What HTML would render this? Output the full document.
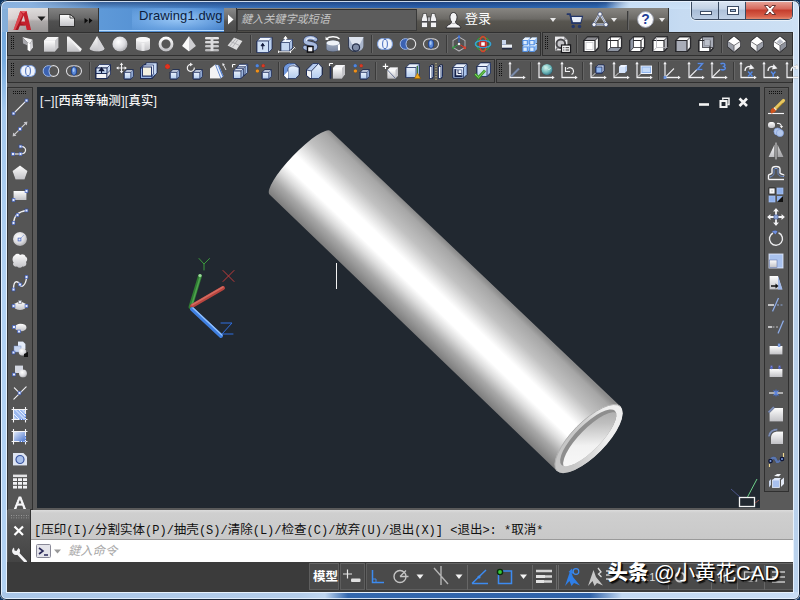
<!DOCTYPE html>
<html lang="zh-CN"><head><meta charset="utf-8"><title>Drawing1.dwg</title>
<style>
*{margin:0;padding:0;box-sizing:border-box}
html,body{width:800px;height:600px;overflow:hidden;background:#0f3560;font-family:"Liberation Sans","Noto Sans CJK SC",sans-serif}
#win{position:absolute;left:0;top:0;width:800px;height:600px;border-radius:7px 7px 6px 6px;overflow:hidden;
 background:linear-gradient(to bottom,#6fa6dc 0,#78acdf 60px,#a6caee 110px,#b2d2f3 300px,#b2d2f3 100%);}
#win>*{position:absolute}
.abs{position:absolute}
#edge{left:0;top:0;width:800px;height:600px;border:1px solid #1b2738;border-radius:7px 7px 6px 6px;box-shadow:inset 0 0 0 1px rgba(235,245,255,.85);z-index:50;pointer-events:none}
#tstrip{left:1px;top:1px;width:798px;height:31px;
 background:linear-gradient(to right,#86afd9 0,#7aa6d5 50px,#5e99d8 100px,#5692d4 140px,#3f7ac4 230px,#2f68b6 420px,#3270bc 596px,#5a90d0 612px,#b8d3ef 630px,#c6dbf2 680px,#cde0f4 800px)}
#tshade{left:1px;top:1px;width:798px;height:8px;background:linear-gradient(to bottom,rgba(10,30,80,.55),rgba(10,30,80,.0))}
#tshadeR{left:606px;top:1px;width:193px;height:8px;background:linear-gradient(to right,rgba(200,224,248,0),rgba(204,226,248,.95) 24px)}
#tshadeL{left:1px;top:1px;width:100px;height:8px;background:linear-gradient(to right,rgba(140,180,225,.95) 30%,rgba(140,180,225,0))}
#tglow{left:132px;top:8px;width:92px;height:23px;background:radial-gradient(ellipse at 50% 50%,rgba(160,205,250,.9),rgba(120,175,235,.6) 60%,rgba(100,160,225,.0) 100%)}
#tline{left:99px;top:30px;width:125px;height:1px;background:#b8dcff}
#title{left:139px;top:8px;font-size:13px;line-height:16px;color:#0c1c3c;letter-spacing:.1px;white-space:nowrap}
#appbtn{left:8px;top:8px;width:40px;height:24px;background:linear-gradient(to right,rgba(255,240,240,.35),rgba(255,255,255,0) 60%),linear-gradient(to bottom,#dedcdc,#cbc6c6 45%,#aeaaaa 55%,#969494)}
#qat{left:48px;top:8px;width:51px;height:24px;background:linear-gradient(to bottom,#828282,#666 45%,#505050 55%,#474747);border-left:1px solid #555;border-right:1px solid #333}
#ic1{left:224px;top:8px;width:445px;height:24px;background:linear-gradient(to bottom,#888682,#6c6a66 45%,#585650 55%,#4e4c48);border-right:1px solid #333}
#arrowbtn{left:224px;top:8px;width:13px;height:24px;background:linear-gradient(to bottom,#8a8a8a,#6a6a6a 45%,#555 55%,#4a4a4a);border-right:1px solid #333}
#search{left:237px;top:9px;width:180px;height:22px;background:#5c5c5c;border:1px solid #3a3a3a;border-top-color:#2e2e2e;color:#c4c4c4;font-size:11.1px;line-height:19px;padding-left:3px;font-style:italic;white-space:nowrap;overflow:hidden}
.wt{color:#fff;font-size:12px;line-height:14px;white-space:nowrap}
.dd{width:0;height:0;border-left:3.5px solid transparent;border-right:3.5px solid transparent;border-top:4px solid #e8e8e8}
#wbtns{left:691px;top:1px;width:102px;height:19px;border:1px solid #3a4a60;border-top:none;border-radius:0 0 5px 5px;overflow:hidden;box-shadow:0 0 0 1px rgba(255,255,255,.55)}
#wbtns>*{position:absolute;top:0;height:18px}
#wmin{left:0;width:27px;background:linear-gradient(to bottom,#d9e4f1,#c2d1e4 45%,#a8bcd6 50%,#bccde3);border-right:1px solid #3a4a60}
#wmax{left:27px;width:27px;background:linear-gradient(to bottom,#dde7f3,#c8d6e8 45%,#afc2da 50%,#c2d2e6);border-right:1px solid #3a4a60}
#wcls{left:54px;width:47px;background:linear-gradient(to bottom,#e8a89c,#d6675a 45%,#c43c2c 50%,#d8604a 85%,#e38a70)}
#tbarea{left:7px;top:32px;width:786px;height:560px;background:#5a5a5a}
.tb{background:#555555;border:1px solid #303030;box-shadow:inset 0 1px 0 #5c5c5c}
.ic{position:absolute;overflow:visible;filter:drop-shadow(0 0 .7px rgba(0,0,0,.55))}
.sv{position:absolute;width:2px;background:linear-gradient(to right,#3a3a3a 50%,#666 50%)}
.gv{position:absolute;width:4px;height:14px;background:conic-gradient(from 0deg at 1px 1px,transparent 0 75%,#101010 75% 100%) 0 0/2px 2px}
.gh{position:absolute;height:4px;width:14px;background:conic-gradient(from 0deg at 1px 1px,transparent 0 75%,#101010 75% 100%) 0 0/2px 2px}
#canvas{left:37px;top:87px;width:723px;height:421px;background:#212830;overflow:hidden}
#vplabel{left:3px;top:7px;color:#f4f4f4;font-size:12.3px;line-height:14px;font-weight:500;white-space:nowrap;letter-spacing:.25px}
#cmdleft{left:8px;top:509px;width:23px;height:53px;background:linear-gradient(to bottom,#6a6a6a,#555 30%,#444 100%);border-right:1px solid #333}
#hist{left:31px;top:510px;width:762px;height:29px;background:linear-gradient(to bottom,#dcdcdc 0,#cfcfcf 3px,#c9c9c9 100%);font-family:"Liberation Mono","Noto Sans CJK SC",monospace;font-size:12px;line-height:16px;color:#111;white-space:nowrap;padding:13px 0 0 3px;overflow:hidden}
#cmdin{left:31px;top:539px;width:762px;height:23px;background:#fff;border-top:1px solid #9a9a9a}
#cmdph{left:68px;top:543.5px;font-size:12.3px;color:#a8a8a8;font-style:italic;line-height:14px;white-space:nowrap}
#status{left:7px;top:562px;width:786px;height:30px;background:#3b3b3b}
.sbb{position:absolute;top:563px;height:27px;background:#4a4a4a;border:1px solid #5e5e5e;border-top-color:#666}
.cj{font-size:12.5px}
#wm{left:607.5px;top:559.5px;font-size:20.45px;line-height:26px;color:#fff;white-space:nowrap;text-shadow:1px 1px 1px #000,2px 2px 1px rgba(0,0,0,.7);font-family:"Liberation Sans","Noto Sans CJK SC",sans-serif;z-index:40}
#wm b{font-weight:900}
</style></head><body>
<svg width="0" height="0" style="position:absolute"><defs>
<linearGradient id="gW" x1="0" y1="0" x2="0" y2="1"><stop offset="0" stop-color="#fdfdfd"/><stop offset="1" stop-color="#c2c2c6"/></linearGradient>
<linearGradient id="gS" x1="0" y1="0" x2="0" y2="1"><stop offset="0" stop-color="#d6d6d8"/><stop offset="1" stop-color="#a4a4a8"/></linearGradient>
<linearGradient id="gB" x1="0" y1="0" x2="0" y2="1"><stop offset="0" stop-color="#ebf2fd"/><stop offset="1" stop-color="#b2cbee"/></linearGradient>
<linearGradient id="gBd" x1="0" y1="0" x2="0" y2="1"><stop offset="0" stop-color="#86a9e0"/><stop offset="1" stop-color="#3f69b6"/></linearGradient>
<radialGradient id="gSp" cx=".4" cy=".35" r=".7"><stop offset="0" stop-color="#ffffff"/><stop offset=".6" stop-color="#dcdce0"/><stop offset="1" stop-color="#a8a8ac"/></radialGradient>
<radialGradient id="gGl" cx=".4" cy=".35" r=".7"><stop offset="0" stop-color="#d8f4f0"/><stop offset=".6" stop-color="#6fb8b8"/><stop offset="1" stop-color="#2f6f86"/></radialGradient>
</defs></svg>
<div id="win">
<div id="tstrip"></div><div id="tshade"></div><div id="tshadeR"></div><div id="tshadeL"></div><div id="tglow"></div><div id="tline"></div>
<div id="title">Drawing1.dwg</div>
<div id="appbtn"><svg class="abs" style="left:2.500px;top:1px" width="36" height="22" viewBox="0 0 36 22"><g transform="translate(1.200 0) scale(.9 1)"><path d="M1.500 21L9 2H16L21 21H16.200L15 16.500H8.500L6.500 21Z" fill="#c4202c"/><path d="M9 2H16L12.500 4.500Z" fill="#e46068"/><path d="M10 12.500L12.800 6.500L14.300 12.500Z" fill="#d8cccc"/><path d="M3.500 21L11.500 6L9.500 14.500L15 16.500H8.500L6.500 21Z" fill="#98101a" opacity=".65"/><path d="M9 2L1.500 21H3.500L11.500 6Z" fill="#e05058" opacity=".8"/></g><path d="M26.500 7.500H34.500L30.500 12Z" fill="#1c1c1c"/></svg></div>
<div id="qat"><svg class="abs" style="left:0;top:0" width="50" height="24" viewBox="0 0 50 24"><path d="M10.500 6.500H21L25.500 10V18.500H10.500Z" fill="url(#gW)" stroke="#1c1c1c" stroke-width=".8"/><path d="M21 6.500V10H25.500Z" fill="#fff" stroke="#1c1c1c" stroke-width=".8"/><path d="M35.500 10L39 12.500L35.500 15.500ZM40 10L43.500 12.500L40 15.500Z" fill="#0a0a0a"/></svg></div>
<div id="ic1"></div><div id="arrowbtn"><svg class="abs" style="left:3px;top:6px" width="7" height="11" viewBox="0 0 7 11"><path d="M1 0.5 L6.5 5.5 L1 10.5Z" fill="#fff"/></svg></div>
<div id="search">鍵入关鍵字或短语</div>
<svg class="abs" style="left:419px;top:9px" width="22" height="22" viewBox="0 0 22 22"><path d="M2.500 10L4 6V4.500H7.500V6L8.500 10V18.500H2.500Z" fill="#f2f2f4" stroke="#2a2a2a" stroke-width=".6"/><path d="M11.500 10L12.500 6V4.500H16V6L17.500 10V18.500H11.500Z" fill="#f2f2f4" stroke="#2a2a2a" stroke-width=".6"/><rect x="8.500" y="8" width="3" height="4.500" fill="#b8b8bc" stroke="#2a2a2a" stroke-width=".5"/><rect x="2.500" y="12" width="6" height="1.600" fill="#4a4a4e"/><rect x="11.500" y="12" width="6" height="1.600" fill="#4a4a4e"/></svg>
<svg class="abs" style="left:443px;top:9px" width="22" height="22" viewBox="0 0 22 22"><path d="M3 19C3.500 16 7 15.500 8.500 14V12.500C6.200 10.500 6.200 3.500 10.500 3.500C14.800 3.500 14.800 10.500 12.500 12.500V14C14 15.500 17.500 16 18 19Z" fill="#f4f4f6" stroke="#26262a" stroke-width=".9"/><path d="M8.500 13.500C9.500 15 11.500 15 12.500 13.500" fill="none" stroke="#9a9aa0" stroke-width=".8"/></svg>
<div class="wt" style="left:465px;top:12px;font-size:13px">登录</div>
<i class="dd abs" style="left:550px;top:18px"></i>
<svg class="abs" style="left:565px;top:10.500px" width="20" height="20" viewBox="0 0 22 22"><path d="M2 3.500H5.500L8 13.500H17L19 6H6.500" fill="none" stroke="#23366a" stroke-width="1.600"/><path d="M7 6.500H18.500L17 12.500H8.500Z" fill="#e8eef8"/><circle cx="9" cy="17" r="1.900" fill="#23366a"/><circle cx="16" cy="17" r="1.900" fill="#23366a"/><path d="M2 3.500H5.500L8 13.500H17" fill="none" stroke="#23366a" stroke-width="1.600"/></svg>
<svg class="abs" style="left:590px;top:9.500px" width="20" height="20" viewBox="0 0 22 22"><path d="M11 4L18 16H4Z" fill="none" stroke="#e8eef8" stroke-width="2.200" stroke-linejoin="round"/><path d="M11 4L18 16H4Z" fill="none" stroke="#4a5a8a" stroke-width=".7" stroke-linejoin="round"/><circle cx="11" cy="4.500" r="2.300" fill="#f4f6fa" stroke="#34446e" stroke-width=".8"/><circle cx="4.500" cy="16" r="2.300" fill="#f4f6fa" stroke="#34446e" stroke-width=".8"/><circle cx="17.500" cy="16" r="2.300" fill="#f4f6fa" stroke="#34446e" stroke-width=".8"/></svg>
<i class="dd abs" style="left:611px;top:18px"></i>
<i class="sv" style="left:627px;top:11px;height:19px"></i>
<svg class="abs" style="left:635px;top:9px" width="21" height="21" viewBox="0 0 22 22"><circle cx="11" cy="11" r="8.300" fill="#fbfbfd" stroke="#9aa0b0" stroke-width="1"/><text x="11" y="16.200" font-family="Liberation Sans,sans-serif" font-weight="bold" font-size="14.500" fill="#1f3f9a" text-anchor="middle">?</text></svg>
<i class="dd abs" style="left:659px;top:18px"></i>
<div id="wbtns"><div id="wmin"><svg width="27" height="18" viewBox="0 0 27 18"><rect x="8.5" y="10.5" width="11" height="3" fill="#fff" stroke="#3c4c64"/></svg></div>
<div id="wmax"><svg width="27" height="18" viewBox="0 0 27 18"><rect x="8.500" y="5.500" width="11" height="8" fill="#fff" stroke="#3c4c64"/><rect x="11.500" y="8.500" width="5" height="2" fill="#a8c0dd" stroke="#3c4c64"/></svg></div>
<div id="wcls"><svg width="47" height="18" viewBox="0 0 47 18"><path d="M18.500 4.500h3.500l2 2.500l2-2.500h3.500l-3.700 4.500l3.700 4.500h-3.500l-2-2.500l-2 2.500h-3.500l3.700-4.500z" fill="#fff" stroke="#5a2a28" stroke-width=".9"/></svg></div></div>

<div class="abs" style="left:792px;top:20px;width:8px;height:580px;background:linear-gradient(to bottom,#cfe1f5 0,#c6daf1 100px,#b6cee9 300px,#bbd3ee 100%)"></div>
<div class="abs" style="left:0;top:592px;width:800px;height:8px;background:linear-gradient(to right,#a9c6e8 0,#b4cdea 300px,#bfd6f0 325px,#3468ae 348px,#2f62a8 590px,#c2d8f1 622px,#c8dcf4 100%)"></div>
<div id="tbarea"></div><div class="abs" style="left:6px;top:32px;width:788px;height:561px;border:1px solid #e6f1fd;border-top:none"></div>
<div class="tb" style="left:7px;top:32px;width:534px;height:24px"></div>
<div class="tb" style="left:542px;top:32px;width:251px;height:24px"></div>
<div class="tb" style="left:7px;top:59px;width:488px;height:24px"></div>
<div class="tb" style="left:496px;top:59px;width:297px;height:24px"></div>
<i class="gv" style="left:11px;top:36px"></i><i class="gv" style="left:545px;top:36px"></i>
<i class="gv" style="left:11px;top:63px"></i><i class="gv" style="left:499px;top:63px"></i>
<svg class="ic" style="left:18px;top:34px" width="20" height="20" viewBox="0 0 20 20"><path d="M4.500 3L14.500 5.500L12 9.500L9.500 8.500L6 5Z" fill="#f4f4f5"/><path d="M4.500 3L6 5L9.500 8.500V11.500L5 9.500Z" fill="#a9a9ae"/><path d="M9.500 8.500L12 9.500V17.500L9.500 16Z" fill="#ffffff"/><path d="M12 9.500L14.500 5.500L15 13.500L12 17.500Z" fill="#d6d6da"/></svg><svg class="ic" style="left:41px;top:34px" width="20" height="20" viewBox="0 0 20 20"><path d="M3 6.500L6.500 3H17.500V13.500L14 17.500H3Z" fill="#c9c9cc"/><path d="M3 6.500L6.500 3H17.500L14 6.500Z" fill="#f6f6f7"/><rect x="3" y="6.500" width="11" height="11" fill="url(#gW)"/></svg><svg class="ic" style="left:64px;top:34px" width="20" height="20" viewBox="0 0 20 20"><path d="M3 2.500H5L18 15L16.500 17.500H3Z" fill="#f2f2f3"/><path d="M3 2.500L16.500 17.500H3Z" fill="url(#gW)"/></svg><svg class="ic" style="left:87px;top:34px" width="20" height="20" viewBox="0 0 20 20"><path d="M10 2L17.500 14.500A7.500 3 0 0 1 2.500 14.500Z" fill="url(#gW)"/><path d="M10 2L11.500 17.400A7.500 3 0 0 0 17.500 14.500Z" fill="#d2d2d5" opacity=".7"/></svg><svg class="ic" style="left:110px;top:34px" width="20" height="20" viewBox="0 0 20 20"><circle cx="10" cy="10" r="7.600" fill="url(#gSp)"/></svg><svg class="ic" style="left:133px;top:34px" width="20" height="20" viewBox="0 0 20 20"><path d="M3 5.500A7 2.500 0 0 1 17 5.500V14.500A7 2.500 0 0 1 3 14.500Z" fill="url(#gW)"/><ellipse cx="10" cy="5.500" rx="7" ry="2.500" fill="#f8f8f9"/><path d="M8.500 9V17H11.500V9Z" fill="#fff" opacity=".5"/></svg><svg class="ic" style="left:156px;top:34px" width="20" height="20" viewBox="0 0 20 20"><circle cx="10" cy="10" r="6" fill="none" stroke="url(#gW)" stroke-width="3"/></svg><svg class="ic" style="left:179px;top:34px" width="20" height="20" viewBox="0 0 20 20"><path d="M10 2L3 12L10 17.500Z" fill="#fafafa"/><path d="M10 2L17 12L10 17.500Z" fill="#cfcfd2"/></svg><svg class="ic" style="left:202px;top:34px" width="20" height="20" viewBox="0 0 20 20"><g fill="#e8e8ea"><rect x="3" y="3" width="14" height="2.600" rx="1"/><rect x="3" y="7" width="14" height="2.600" rx="1" fill="#d8d8da"/><rect x="3" y="11" width="14" height="2.600" rx="1" fill="#c8c8ca"/><rect x="3" y="15" width="14" height="2.600" rx="1" fill="#b8b8ba"/><rect x="8.500" y="3" width="3" height="14" fill="#dcdcde"/></g></svg><svg class="ic" style="left:225px;top:34px" width="20" height="20" viewBox="0 0 20 20"><path d="M2.500 11.500L9 3.500L17.500 7L11.500 16Z" fill="#dededf"/><path d="M5.700 7.500L14.500 11.500M7.400 13.300L13.200 5.200M4.500 12.400L11.200 4.400" stroke="#a8a8ac" stroke-width=".8" fill="none"/></svg><i class="sv" style="left:250px;top:35px;height:18px"></i><svg class="ic" style="left:254px;top:34px" width="20" height="20" viewBox="0 0 20 20"><path d="M3 7L6.5 3.5H18.0V15.0L14.5 18.5H3Z" fill="#b9cfee" stroke="#263663" stroke-width="0.8" stroke-linejoin="round"/><path d="M3 7L6.5 3.5H18.0L14.5 7Z" fill="#f0f5fd" stroke="#263663" stroke-width="0.5599999999999999" stroke-linejoin="round"/><rect x="3" y="7" width="11.5" height="11.5" fill="#cfe0f6" stroke="#263663" stroke-width="0.8" stroke-linejoin="round"/><path d="M8.700 15.500V10.500M7 11.800L8.700 9.300L10.400 11.800Z" stroke="#10183a" stroke-width=".9" fill="#10183a"/></svg><svg class="ic" style="left:276px;top:34px" width="20" height="20" viewBox="0 0 20 20"><path d="M5 8.5L8 5.5H16.5V14.0L13.5 17.0H5Z" fill="#a9c0e4" stroke="#263663" stroke-width="0.7" stroke-linejoin="round"/><path d="M5 8.5L8 5.5H16.5L13.5 8.5Z" fill="#e8f0fb" stroke="#263663" stroke-width="0.48999999999999994" stroke-linejoin="round"/><rect x="5" y="8.5" width="8.5" height="8.5" fill="#c4d6f0" stroke="#263663" stroke-width="0.7" stroke-linejoin="round"/><path d="M9.500 7.500V3.500M7.900 4.800L9.500 2.300L11.100 4.800Z" stroke="#fff" stroke-width="1" fill="#fff"/><path d="M2.500 17.800H14.500L18.500 13.500" stroke="#fff" stroke-width="1" fill="none"/><path d="M2.500 16.500V19M14.500 16.500V19M17.600 12.600L19.400 14.400" stroke="#fff" stroke-width=".9"/></svg><svg class="ic" style="left:300px;top:34px" width="20" height="20" viewBox="0 0 20 20"><path d="M15.500 5.500C12 2.500 4.500 3.500 5.500 7.500C6.200 10.500 15.500 8.500 15.500 12.500C15.500 15.500 9 16 5 13.500" fill="none" stroke="#3f4f7c" stroke-width="4.600" stroke-linecap="round"/><path d="M15.500 5.500C12 2.500 4.500 3.500 5.500 7.500C6.200 10.500 15.500 8.500 15.500 12.500C15.500 15.500 9 16 5 13.500" fill="none" stroke="#a9bbdd" stroke-width="3.400" stroke-linecap="round"/><path d="M14.500 4.800C11.500 3 6 3.800 6.500 6.800" fill="none" stroke="#eaf0fb" stroke-width="1.200"/><rect x="7.500" y="12.500" width="5.500" height="5.500" fill="#f4f4f8" stroke="#0c0c10" stroke-width="1.400"/></svg><svg class="ic" style="left:323px;top:34px" width="20" height="20" viewBox="0 0 20 20"><path d="M3.500 9A6.500 2.500 0 0 1 16.500 9V15A6.500 2.500 0 0 1 3.500 15Z" fill="url(#gBd)" opacity=".75"/><path d="M3.500 9A6.500 2.500 0 0 1 16.500 9V15A6.500 2.500 0 0 1 3.500 15Z" fill="url(#gS)" opacity=".6"/><ellipse cx="10" cy="9" rx="6.500" ry="2.500" fill="#eef2f8"/><path d="M15 11V16.500H17V10Z" fill="#fff"/><path d="M3.500 5C6 2 14 2 16.500 5" stroke="#fff" stroke-width="1.300" fill="none"/><path d="M2.500 2.500V6H6Z" fill="#fff"/></svg><svg class="ic" style="left:346px;top:34px" width="20" height="20" viewBox="0 0 20 20"><path d="M2.500 3H17.500V11C17.500 15 15 17.500 10 17.500C5 17.500 2.500 15 2.500 11Z" fill="#aab6cc"/><path d="M2.500 3H17.500L14 10H6Z" fill="#dde3ee"/><circle cx="10" cy="13.500" r="3.600" fill="#7f8ca6" stroke="#26304a" stroke-width="1.200"/><path d="M2.500 3V11C2.500 15 5 17.500 10 17.500" fill="none" stroke="#26304a" stroke-width=".8"/></svg><i class="sv" style="left:371px;top:35px;height:18px"></i><svg class="ic" style="left:375px;top:34px" width="20" height="20" viewBox="0 0 20 20"><path d="M7.500 4.500C9 4.500 10 5 10 5C10 5 11 4.500 12.500 4.500C15.500 4.500 17.500 7 17.500 10C17.500 13 15.500 15.500 12.500 15.500C11 15.500 10 15 10 15C10 15 9 15.500 7.500 15.500C4.500 15.500 2.500 13 2.500 10C2.500 7 4.500 4.500 7.500 4.500Z" fill="#eef3fc" stroke="#7f9fd8" stroke-width="1.200"/><ellipse cx="10" cy="10" rx="2.400" ry="4.600" fill="none" stroke="#4a6fc0" stroke-width="1"/></svg><svg class="ic" style="left:398px;top:34px" width="20" height="20" viewBox="0 0 20 20"><ellipse cx="12.500" cy="10" rx="5.200" ry="5.400" fill="none" stroke="#e4e4e6" stroke-width="1.200"/><path d="M7.500 4.600A5.400 5.400 0 1 0 7.500 15.400A5.400 5.400 0 0 0 10 14.700A6.500 6.500 0 0 1 10 5.300A5.400 5.400 0 0 0 7.500 4.600Z" fill="#3b62b2" stroke="#a9c0ea" stroke-width="1"/></svg><svg class="ic" style="left:421px;top:34px" width="20" height="20" viewBox="0 0 20 20"><rect x="2.500" y="4.800" width="15" height="10.400" rx="5.200" fill="none" stroke="#d8d8dc" stroke-width="1.200"/><ellipse cx="10" cy="10" rx="2.500" ry="4.200" fill="#5d8ad8" stroke="#244a9a" stroke-width="1"/><ellipse cx="9.600" cy="9" rx="1" ry="2" fill="#a8c8f4"/></svg><i class="sv" style="left:446px;top:35px;height:18px"></i><svg class="ic" style="left:449px;top:34px" width="20" height="20" viewBox="0 0 20 20"><path d="M10 3L16 6.500V13.500L10 17L4 13.500V6.500Z" fill="none" stroke="#b8b8bc" stroke-width="1.100"/><path d="M10 10V2.500" stroke="#4a7ad8" stroke-width="1.200"/><circle cx="10" cy="2.500" r="1.200" fill="#4a7ad8"/><path d="M10 10L4.500 13.500" stroke="#3a9a4a" stroke-width="1.200"/><path d="M10 10L15.500 13.500" stroke="#d04030" stroke-width="1.200"/><circle cx="15.800" cy="13.800" r="1.500" fill="#d84030"/><circle cx="4.300" cy="13.700" r="1.200" fill="#3a9a4a"/><circle cx="10" cy="10" r="1.600" fill="#fff" stroke="#555" stroke-width=".7"/></svg><svg class="ic" style="left:473px;top:34px" width="20" height="20" viewBox="0 0 20 20"><circle cx="10" cy="10" r="6.800" fill="none" stroke="#3f9a46" stroke-width="1.500"/><ellipse cx="10" cy="10" rx="3.400" ry="7.600" fill="none" stroke="#d2452f" stroke-width="1.700"/><ellipse cx="10" cy="10" rx="7.800" ry="3.600" fill="none" stroke="#3aa0d0" stroke-width="1.500"/><rect x="7.600" y="7.600" width="4.800" height="4.800" fill="#fff" stroke="#c03030" stroke-width="1.300"/></svg><svg class="ic" style="left:496px;top:34px" width="20" height="20" viewBox="0 0 20 20"><path d="M6 6H10V10.500H16V14.500H6Z" fill="#eef2f8"/><path d="M6 6H10V10.500H6Z" fill="#c9d6ee"/><path d="M6 14.500H16" stroke="#232a44" stroke-width="1.600"/><path d="M6 10.500H10" stroke="#8a9ac0" stroke-width=".8"/></svg><svg class="ic" style="left:520px;top:34px" width="20" height="20" viewBox="0 0 20 20"><path d="M2.5 12.6L5.1 10.0H10.3V15.200000000000001L7.7 17.8H2.5Z" fill="#8db8f0"/><path d="M2.5 12.6L5.1 10.0H10.3L7.7 12.6Z" fill="#eef6ff"/><rect x="2.5" y="12.6" width="5.2" height="5.2" fill="#4a8ae4"/><rect x="3.4" y="13.5" width="3.4000000000000004" height="3.4000000000000004" fill="#dcecfd"/><path d="M9.3 12.6L11.9 10.0H17.1V15.200000000000001L14.5 17.8H9.3Z" fill="#8db8f0"/><path d="M9.3 12.6L11.9 10.0H17.1L14.5 12.6Z" fill="#eef6ff"/><rect x="9.3" y="12.6" width="5.2" height="5.2" fill="#4a8ae4"/><rect x="10.200000000000001" y="13.5" width="3.4000000000000004" height="3.4000000000000004" fill="#dcecfd"/><path d="M2.5 6L5.1 3.4H10.3V8.6L7.7 11.2H2.5Z" fill="#8db8f0"/><path d="M2.5 6L5.1 3.4H10.3L7.7 6Z" fill="#eef6ff"/><rect x="2.5" y="6" width="5.2" height="5.2" fill="#4a8ae4"/><rect x="3.4" y="6.9" width="3.4000000000000004" height="3.4000000000000004" fill="#dcecfd"/><path d="M9.3 6L11.9 3.4H17.1V8.6L14.5 11.2H9.3Z" fill="#8db8f0"/><path d="M9.3 6L11.9 3.4H17.1L14.5 6Z" fill="#eef6ff"/><rect x="9.3" y="6" width="5.2" height="5.2" fill="#4a8ae4"/><rect x="10.200000000000001" y="6.9" width="3.4000000000000004" height="3.4000000000000004" fill="#dcecfd"/></svg><svg class="ic" style="left:551.5px;top:34px" width="20" height="20" viewBox="0 0 20 20"><path d="M3 2.500H12L15.500 6V16.500H3Z" fill="#ececee"/><path d="M12 2.500V6H15.500Z" fill="#a0a0a4"/><circle cx="8.800" cy="9.800" r="4.300" fill="#c4c4c8" stroke="#48484c" stroke-width="2"/><path d="M5.500 13.500L3.800 16" stroke="#77777c" stroke-width="1.600"/><rect x="9.500" y="11" width="9" height="7.500" fill="#f4f4f6" stroke="#18181c" stroke-width="1.200"/><path d="M11.200 13.700H12.400M13.500 13.700H17M11.200 16H12.400M13.500 16H17" stroke="#333" stroke-width="1"/></svg><i class="sv" style="left:576px;top:35px;height:18px"></i><svg class="ic" style="left:581px;top:34px" width="20" height="20" viewBox="0 0 20 20"><path d="M3 6.500L6.500 3H17.500V13.500L14 17.500H3Z" fill="#f4f4f4" stroke="#2a2a2e" stroke-width="1.200" stroke-linejoin="round"/><path d="M3 6.500L6.500 3H17.500L14 6.500Z" fill="#8c8c92" stroke="#2a2a2e" stroke-width=".9" stroke-linejoin="round"/><rect x="3" y="6.500" width="11" height="11" fill="#fdfdfd" stroke="#2a2a2e" stroke-width="1.200" stroke-linejoin="round"/><rect x="5" y="8.500" width="7" height="7" fill="#fff" stroke="#c8c8cc" stroke-width=".8"/></svg><svg class="ic" style="left:604px;top:34px" width="20" height="20" viewBox="0 0 20 20"><path d="M3 6.500L6.500 3H17.500V13.500L14 17.500H3Z" fill="#ffffff" stroke="#2a2a2e" stroke-width="1.200" stroke-linejoin="round"/><path d="M3 6.500L6.500 3H17.500L14 6.500Z" fill="#ffffff" stroke="#2a2a2e" stroke-width=".9" stroke-linejoin="round"/><rect x="3" y="6.500" width="11" height="11" fill="#ffffff" stroke="#2a2a2e" stroke-width="1.200" stroke-linejoin="round"/><path d="M3 17.500L6.500 13.500H17.500L14 17.500Z" fill="#8f96a4" stroke="#2a2a2e" stroke-width=".8"/><path d="M6.500 3V13.500" stroke="#2a2a2e" stroke-width=".8"/></svg><svg class="ic" style="left:627px;top:34px" width="20" height="20" viewBox="0 0 20 20"><path d="M3 6.500L6.500 3H17.500V13.500L14 17.500H3Z" fill="#ffffff" stroke="#2a2a2e" stroke-width="1.200" stroke-linejoin="round"/><path d="M3 6.500L6.500 3H17.500L14 6.500Z" fill="#ffffff" stroke="#2a2a2e" stroke-width=".9" stroke-linejoin="round"/><rect x="3" y="6.500" width="11" height="11" fill="#ffffff" stroke="#2a2a2e" stroke-width="1.200" stroke-linejoin="round"/><path d="M3 6.500L6.500 3V13.500L3 17.500Z" fill="#8f96a4" stroke="#2a2a2e" stroke-width=".8"/><path d="M6.500 13.500H17.500" stroke="#2a2a2e" stroke-width=".8"/></svg><svg class="ic" style="left:650px;top:34px" width="20" height="20" viewBox="0 0 20 20"><path d="M3 6.500L6.500 3H17.500V13.500L14 17.500H3Z" fill="#b8b8be" stroke="#2a2a2e" stroke-width="1.200" stroke-linejoin="round"/><path d="M3 6.500L6.500 3H17.500L14 6.500Z" fill="#f4f4f4" stroke="#2a2a2e" stroke-width=".9" stroke-linejoin="round"/><rect x="3" y="6.500" width="11" height="11" fill="#fdfdfd" stroke="#2a2a2e" stroke-width="1.200" stroke-linejoin="round"/><path d="M6.500 3V13.500H17.500M6.500 13.500L3 17.500" fill="none" stroke="#b0b0b6" stroke-width=".8"/></svg><svg class="ic" style="left:673px;top:34px" width="20" height="20" viewBox="0 0 20 20"><path d="M3 6.500L6.500 3H17.500V13.500L14 17.500H3Z" fill="#f0f0f2" stroke="#2a2a2e" stroke-width="1.200" stroke-linejoin="round"/><path d="M3 6.500L6.500 3H17.500L14 6.500Z" fill="#fafafa" stroke="#2a2a2e" stroke-width=".9" stroke-linejoin="round"/><rect x="3" y="6.500" width="11" height="11" fill="#a9adb8" stroke="#2a2a2e" stroke-width="1.200" stroke-linejoin="round"/></svg><svg class="ic" style="left:696px;top:34px" width="20" height="20" viewBox="0 0 20 20"><path d="M3 6.500L6.500 3H17.500V13.500L14 17.500H3Z" fill="#fff" stroke="#2a2a2e" stroke-width="1.200" stroke-linejoin="round"/><path d="M3 6.500L6.500 3H17.500L14 6.500Z" fill="#fff" stroke="#2a2a2e" stroke-width=".9" stroke-linejoin="round"/><rect x="3" y="6.500" width="11" height="11" fill="#fdfdfd" stroke="#2a2a2e" stroke-width="1.200" stroke-linejoin="round"/><rect x="6.500" y="3" width="11" height="10.500" fill="#a9adb8" stroke="#3a3a40" stroke-width=".8"/><path d="M3 6.500H14V17.500" fill="none" stroke="#2a2a2e" stroke-width="1"/><rect x="8.500" y="5.500" width="5.500" height="6" fill="#bcc0ca" stroke="#8a8e98" stroke-width=".6"/></svg><i class="sv" style="left:721px;top:35px;height:18px"></i><svg class="ic" style="left:724px;top:34px" width="20" height="20" viewBox="0 0 20 20"><path d="M10 2.500L16.200 7.500V12.500L10 17.800L3.800 12.500V7.500Z" fill="#fff" stroke="#2a2a2e" stroke-width="1.200" stroke-linejoin="round"/><path d="M3.800 7.500L10 11.500V17.800L3.800 12.500Z" fill="#9a9ea8"/><path d="M16.200 7.500L10 11.500V17.800L16.200 12.500Z" fill="#f0f0f2"/><path d="M10 2.500L16.200 7.500L10 11.500L3.800 7.500Z" fill="#fff"/><path d="M3.800 7.500L10 11.500L16.200 7.500M10 11.500V17.800" fill="none" stroke="#55555a" stroke-width=".8"/></svg><svg class="ic" style="left:747px;top:34px" width="20" height="20" viewBox="0 0 20 20"><path d="M10 2.500L16.200 7.500V12.500L10 17.800L3.800 12.500V7.500Z" fill="#fff" stroke="#2a2a2e" stroke-width="1.200" stroke-linejoin="round"/><path d="M3.800 7.500L10 11.500V17.800L3.800 12.500Z" fill="#f4f4f4"/><path d="M16.200 7.500L10 11.500V17.800L16.200 12.500Z" fill="#9a9ea8"/><path d="M10 2.500L16.200 7.500L10 11.500L3.800 7.500Z" fill="#fff"/><path d="M3.800 7.500L10 11.500L16.200 7.500M10 11.500V17.800" fill="none" stroke="#55555a" stroke-width=".8"/></svg><svg class="ic" style="left:770px;top:34px" width="20" height="20" viewBox="0 0 20 20"><path d="M10 2.500L16.200 7.500V12.500L10 17.800L3.800 12.500V7.500Z" fill="#fff" stroke="#2a2a2e" stroke-width="1.200" stroke-linejoin="round"/><path d="M3.800 7.500L10 11.500V17.800L3.800 12.500Z" fill="#fff"/><path d="M16.200 7.500L10 11.500V17.800L16.200 12.500Z" fill="#8e929c"/><path d="M10 2.500L16.200 7.500L10 11.500L3.800 7.500Z" fill="#fff"/><path d="M3.800 7.500L10 11.500L16.200 7.500M10 11.500V17.800" fill="none" stroke="#55555a" stroke-width=".8"/><path d="M10 5L13.500 8L10 10.500L6.500 8Z" fill="#b8bcc6"/></svg>
<svg class="ic" style="left:18px;top:60.5px" width="20" height="20" viewBox="0 0 20 20"><path d="M7.500 4.500C9 4.500 10 5 10 5C10 5 11 4.500 12.500 4.500C15.500 4.500 17.500 7 17.500 10C17.500 13 15.500 15.500 12.500 15.500C11 15.500 10 15 10 15C10 15 9 15.500 7.500 15.500C4.500 15.500 2.500 13 2.500 10C2.500 7 4.500 4.500 7.500 4.500Z" fill="#eef3fc" stroke="#7f9fd8" stroke-width="1.200"/><ellipse cx="10" cy="10" rx="2.400" ry="4.600" fill="none" stroke="#4a6fc0" stroke-width="1"/></svg><svg class="ic" style="left:41px;top:60.5px" width="20" height="20" viewBox="0 0 20 20"><ellipse cx="12.500" cy="10" rx="5.200" ry="5.400" fill="none" stroke="#e4e4e6" stroke-width="1.200"/><path d="M7.500 4.600A5.400 5.400 0 1 0 7.500 15.400A5.400 5.400 0 0 0 10 14.700A6.500 6.500 0 0 1 10 5.300A5.400 5.400 0 0 0 7.500 4.600Z" fill="#3b62b2" stroke="#a9c0ea" stroke-width="1"/></svg><svg class="ic" style="left:64px;top:60.5px" width="20" height="20" viewBox="0 0 20 20"><rect x="2.500" y="4.800" width="15" height="10.400" rx="5.200" fill="none" stroke="#d8d8dc" stroke-width="1.200"/><ellipse cx="10" cy="10" rx="2.500" ry="4.200" fill="#5d8ad8" stroke="#244a9a" stroke-width="1"/><ellipse cx="9.600" cy="9" rx="1" ry="2" fill="#a8c8f4"/></svg><i class="sv" style="left:89px;top:61.5px;height:18px"></i><svg class="ic" style="left:93px;top:60.5px" width="20" height="20" viewBox="0 0 20 20"><path d="M3 7L6.500 3.500H17.500V13L14 17.500H3Z" fill="#c4d4ee" stroke="#1d2b55" stroke-width="1" stroke-linejoin="round"/><path d="M3 7L6.500 3.500H17.500L14 7Z" fill="#e4ecfa" stroke="#1d2b55" stroke-width=".7"/><rect x="3" y="7" width="11" height="5.500" fill="url(#gB)" stroke="#1d2b55" stroke-width="1"/><rect x="3" y="12.500" width="11" height="5" fill="#f4f4f6" stroke="#1d2b55" stroke-width="1"/><path d="M14 12.500L17.500 9V13L14 17.500Z" fill="#dcdce0" stroke="#1d2b55" stroke-width=".7"/><path d="M8.500 12V8.500M6.300 9.800L8.500 7L10.700 9.800Z" stroke="#10183a" stroke-width="1.100" fill="#10183a"/></svg><svg class="ic" style="left:115px;top:60.5px" width="20" height="20" viewBox="0 0 20 20"><path d="M6.500 2.500V11.500M2 7H11" stroke="#f2f2f4" stroke-width="1.100"/><path d="M6.500 1.500L8.200 4H4.800ZM6.500 12.500L8.200 10H4.800ZM1 7L3.500 5.300V8.700ZM12 7L9.500 5.300V8.700Z" fill="#f2f2f4"/><path d="M9.3 11.3L11.700000000000001 8.9H18.3V15.499999999999998L15.9 17.9H9.3Z" fill="#a9c3ea" stroke="#263663" stroke-width="0.9" stroke-linejoin="round"/><path d="M9.3 11.3L11.700000000000001 8.9H18.3L15.9 11.3Z" fill="#eaf1fc" stroke="#263663" stroke-width="0.63" stroke-linejoin="round"/><rect x="9.3" y="11.3" width="6.6" height="6.6" fill="url(#gB)" stroke="#263663" stroke-width="0.9" stroke-linejoin="round"/></svg><svg class="ic" style="left:138px;top:60.5px" width="20" height="20" viewBox="0 0 20 20"><path d="M2.500 7L6 3.500H17.500V13.500L14 17.500H2.500Z" fill="#9ab6e6" stroke="#1d2b55" stroke-width="1" stroke-linejoin="round"/><path d="M8 3.500V1.800H19V12L17.500 13.500" fill="#c8daf4" stroke="#1d2b55" stroke-width=".8"/><rect x="2.500" y="7" width="11.500" height="10.500" fill="none" stroke="#1d2b55" stroke-width="1"/><rect x="4.500" y="6" width="9" height="9" fill="#f3f1e2" stroke="#27376a" stroke-width="1"/><path d="M4.500 6L6.500 4H15.500V13L13.500 15" fill="#dfe8f8" stroke="#27376a" stroke-width=".7"/><rect x="4.500" y="6" width="9" height="9" fill="#f3f1e2" stroke="#27376a" stroke-width="1"/></svg><svg class="ic" style="left:161px;top:60.5px" width="20" height="20" viewBox="0 0 20 20"><circle cx="6.500" cy="5.500" r="2.500" fill="#e0331f"/><path d="M9.3 11.3L11.700000000000001 8.9H18.3V15.499999999999998L15.9 17.9H9.3Z" fill="#a9c3ea" stroke="#263663" stroke-width="0.9" stroke-linejoin="round"/><path d="M9.3 11.3L11.700000000000001 8.9H18.3L15.9 11.3Z" fill="#eaf1fc" stroke="#263663" stroke-width="0.63" stroke-linejoin="round"/><rect x="9.3" y="11.3" width="6.6" height="6.6" fill="url(#gB)" stroke="#263663" stroke-width="0.9" stroke-linejoin="round"/></svg><svg class="ic" style="left:184px;top:60.5px" width="20" height="20" viewBox="0 0 20 20"><path d="M10.300 6.500A3.500 3.500 0 1 1 7 3.400" fill="none" stroke="#ececee" stroke-width="1.300"/><path d="M6 1.500L9 3.400L6 5.400Z" fill="#ececee"/><path d="M9.3 11.3L11.700000000000001 8.9H18.3V15.499999999999998L15.9 17.9H9.3Z" fill="#a9c3ea" stroke="#263663" stroke-width="0.9" stroke-linejoin="round"/><path d="M9.3 11.3L11.700000000000001 8.9H18.3L15.9 11.3Z" fill="#eaf1fc" stroke="#263663" stroke-width="0.63" stroke-linejoin="round"/><rect x="9.3" y="11.3" width="6.6" height="6.6" fill="url(#gB)" stroke="#263663" stroke-width="0.9" stroke-linejoin="round"/></svg><svg class="ic" style="left:207px;top:60.5px" width="20" height="20" viewBox="0 0 20 20"><path d="M3 7.500L8 3.500L12 4.500L16.500 15L13.500 17.500H3Z" fill="#f2f2f4"/><path d="M8 3.500L12 4.500L16.500 15L13.500 17.500Z" fill="#4e79c8"/><path d="M9.800 4L14.800 16.400" stroke="#e6eefc" stroke-width="1.600"/><path d="M16 3L19 9" stroke="#f0f0f2" stroke-width="1"/><path d="M15.300 2L18 3.200L15.600 5Z" fill="#f0f0f2"/></svg><svg class="ic" style="left:230px;top:60.5px" width="20" height="20" viewBox="0 0 20 20"><path d="M7 6L9.6 3.4H17.6V11.4L15 14H7Z" fill="#a9c3ea" stroke="#263663" stroke-width="0.9" stroke-linejoin="round"/><path d="M7 6L9.6 3.4H17.6L15 6Z" fill="#eaf1fc" stroke="#263663" stroke-width="0.63" stroke-linejoin="round"/><rect x="7" y="6" width="8" height="8" fill="url(#gB)" stroke="#263663" stroke-width="0.9" stroke-linejoin="round"/><path d="M3.5 10L5.9 7.6H13.4V15.1L11.0 17.5H3.5Z" fill="#a9c3ea" stroke="#263663" stroke-width="0.9" stroke-linejoin="round"/><path d="M3.5 10L5.9 7.6H13.4L11.0 10Z" fill="#eaf1fc" stroke="#263663" stroke-width="0.63" stroke-linejoin="round"/><rect x="3.5" y="10" width="7.5" height="7.5" fill="url(#gB)" stroke="#263663" stroke-width="0.9" stroke-linejoin="round"/><path d="M2.500 3.500H5.500M2.500 3.500V6.500" stroke="#fff" stroke-width="1.100" fill="none"/></svg><svg class="ic" style="left:253px;top:60.5px" width="20" height="20" viewBox="0 0 20 20"><circle cx="4.200" cy="4.700" r="1.800" fill="#4f86e0"/><circle cx="10.200" cy="4.700" r="1.800" fill="#d83a24"/><circle cx="4.400" cy="10" r="1.800" fill="#f09018"/><path d="M9.3 11.3L11.700000000000001 8.9H18.3V15.499999999999998L15.9 17.9H9.3Z" fill="#a9c3ea" stroke="#263663" stroke-width="0.9" stroke-linejoin="round"/><path d="M9.3 11.3L11.700000000000001 8.9H18.3L15.9 11.3Z" fill="#eaf1fc" stroke="#263663" stroke-width="0.63" stroke-linejoin="round"/><rect x="9.3" y="11.3" width="6.6" height="6.6" fill="url(#gB)" stroke="#263663" stroke-width="0.9" stroke-linejoin="round"/></svg><i class="sv" style="left:278px;top:61.5px;height:18px"></i><svg class="ic" style="left:281px;top:60.5px" width="20" height="20" viewBox="0 0 20 20"><path d="M3 8C3 4.500 6 2.500 10 2.500H14L18 6.500V14L14.500 17.500H6L3 14.500Z" fill="#c7d4ea" stroke="#1d2b55" stroke-width="1" stroke-linejoin="round"/><path d="M3 8C3 4.500 6 2.500 10 2.500H14L13 3.500C9 3.500 7 5.500 7 8.500V14L6 17.500L3 14.500Z" fill="#6f97dc"/><path d="M7 8.500C7 6 9 4.800 13 4.800L18 6.500V14L14.500 17.500H7Z" fill="url(#gB)" stroke="#1d2b55" stroke-width=".7"/><path d="M3 14.500L6 17.500H7V10Z" fill="#fff"/></svg><svg class="ic" style="left:304px;top:60.5px" width="20" height="20" viewBox="0 0 20 20"><path d="M2.500 9L9 2.500H14.500L18 6.500V14L14.500 17.500H6L2.500 14.500Z" fill="#f4f4f6" stroke="#1d2b55" stroke-width="1" stroke-linejoin="round"/><path d="M2.500 9L9 2.500H14.500L7.500 10Z" fill="#b4caee" stroke="#1d2b55" stroke-width=".7"/><path d="M7.500 10L14.500 2.500L18 6.500V14L14.500 17.500H7.500Z" fill="url(#gB)" stroke="#1d2b55" stroke-width=".7"/></svg><svg class="ic" style="left:327px;top:60.5px" width="20" height="20" viewBox="0 0 20 20"><path d="M6 7L9 4H18V13.500L15 17.500H6Z" fill="#c4c4c8"/><path d="M6 7L9 4H18L15 7Z" fill="#f6f6f8"/><rect x="6" y="7" width="9" height="10.500" fill="url(#gW)"/><path d="M3.500 5.500V17.500" stroke="#1d2b55" stroke-width="1.400"/><path d="M2.500 2.500H6M2.500 2.500V5" stroke="#fff" stroke-width="1.200" fill="none"/></svg><svg class="ic" style="left:351px;top:60.5px" width="20" height="20" viewBox="0 0 20 20"><circle cx="4.200" cy="4.700" r="1.800" fill="#4f86e0"/><circle cx="10.200" cy="4.700" r="1.800" fill="#d83a24"/><circle cx="4.400" cy="10" r="1.800" fill="#f09018"/><path d="M9.3 11.3L11.700000000000001 8.9H18.3V15.499999999999998L15.9 17.9H9.3Z" fill="#a9c3ea" stroke="#263663" stroke-width="0.9" stroke-linejoin="round"/><path d="M9.3 11.3L11.700000000000001 8.9H18.3L15.9 11.3Z" fill="#eaf1fc" stroke="#263663" stroke-width="0.63" stroke-linejoin="round"/><rect x="9.3" y="11.3" width="6.6" height="6.6" fill="url(#gB)" stroke="#263663" stroke-width="0.9" stroke-linejoin="round"/></svg><i class="sv" style="left:375px;top:61.5px;height:18px"></i><svg class="ic" style="left:379px;top:60.5px" width="20" height="20" viewBox="0 0 20 20"><path d="M8.500 9L11 6.500H19V15L16.500 17.500H8.500Z" fill="#c4c4c8"/><path d="M8.500 9L11 6.500H19L16.500 9Z" fill="#f6f6f8"/><rect x="8.500" y="9" width="8" height="8.500" fill="url(#gW)"/><path d="M8.500 9L16.500 17.500" stroke="#5a6a90" stroke-width=".9"/><path d="M6.500 2.500V8M3.700 5.300H9.300" stroke="#fff" stroke-width="1.200"/></svg><svg class="ic" style="left:403px;top:60.5px" width="20" height="20" viewBox="0 0 20 20"><path d="M3 6.5L6.5 3.0H16.5V13.0L13 16.5H3Z" fill="#a9c3ea" stroke="#263663" stroke-width="0.8" stroke-linejoin="round"/><path d="M3 6.5L6.5 3.0H16.5L13 6.5Z" fill="#eaf1fc" stroke="#263663" stroke-width="0.5599999999999999" stroke-linejoin="round"/><rect x="3" y="6.5" width="10" height="10" fill="url(#gB)" stroke="#263663" stroke-width="0.8" stroke-linejoin="round"/><path d="M14.500 5V13" stroke="#3a7a3a" stroke-width="1.200"/><path d="M14.500 12L17.500 17.500H11.500Z" fill="#f0a81c" stroke="#a86a08" stroke-width=".6"/></svg><svg class="ic" style="left:426px;top:60.5px" width="20" height="20" viewBox="0 0 20 20"><path d="M3.500 5.500L5 4H7.500V15.500L6 17.500H3.500Z" fill="url(#gB)" stroke="#1d2b55" stroke-width="1"/><path d="M12.500 5.500L14 4H16.500V15.500L15 17.500H12.500Z" fill="url(#gB)" stroke="#1d2b55" stroke-width="1"/><rect x="3.500" y="5.500" width="2.500" height="12" fill="#f4f8ff" stroke="#1d2b55" stroke-width=".8"/><rect x="12.500" y="5.500" width="2.500" height="12" fill="#f4f8ff" stroke="#1d2b55" stroke-width=".8"/><path d="M10 2V19" stroke="#f4e8b0" stroke-width="1" stroke-dasharray="1.300 1.300"/></svg><svg class="ic" style="left:449.5px;top:60.5px" width="20" height="20" viewBox="0 0 20 20"><path d="M3 6.5L6.5 3.0H17.0V13.5L13.5 17.0H3Z" fill="#a9c3ea" stroke="#263663" stroke-width="0.8" stroke-linejoin="round"/><path d="M3 6.5L6.5 3.0H17.0L13.5 6.5Z" fill="#eaf1fc" stroke="#263663" stroke-width="0.5599999999999999" stroke-linejoin="round"/><rect x="3" y="6.5" width="10.5" height="10.5" fill="url(#gB)" stroke="#263663" stroke-width="0.8" stroke-linejoin="round"/><rect x="5.300" y="8.800" width="6.400" height="6.400" fill="#f0f5fd"/><path d="M5.300 8V15.200H12.500" stroke="#14204a" stroke-width="1.800" fill="none"/><path d="M5.300 8.800H11.700V15.200" stroke="#5a6a9a" stroke-width=".8" fill="none"/><path d="M8 9V12.500H11.500" stroke="#14204a" stroke-width=".9" fill="none"/></svg><svg class="ic" style="left:472px;top:60.5px" width="20" height="20" viewBox="0 0 20 20"><path d="M5 5.5L8.5 2.0H18.5V12.0L15 15.5H5Z" fill="#a9c3ea" stroke="#263663" stroke-width="0.9" stroke-linejoin="round"/><path d="M5 5.5L8.5 2.0H18.5L15 5.5Z" fill="#eaf1fc" stroke="#263663" stroke-width="0.63" stroke-linejoin="round"/><rect x="5" y="5.5" width="10" height="10" fill="url(#gB)" stroke="#263663" stroke-width="0.9" stroke-linejoin="round"/><path d="M3 13L6.500 16.500L13 9.500" fill="none" stroke="#3f9a2f" stroke-width="2.800"/><path d="M3 13L6.500 16.500L13 9.500" fill="none" stroke="#7ed05a" stroke-width="1"/></svg><svg class="ic" style="left:506px;top:60.5px" width="20" height="20" viewBox="0 0 20 20"><path d="M4 2V16.500H18.500" fill="none" stroke="#f2f2f4" stroke-width="1.300"/><path d="M4 0.500L5.800 3.300H2.200ZM19.800 16.500L17 14.700V18.300Z" fill="#f2f2f4"/><path d="M5 15.500L13 7.500" stroke="#7a8aa8" stroke-width="2.400"/></svg><i class="sv" style="left:530px;top:61.5px;height:18px"></i><svg class="ic" style="left:535px;top:60.5px" width="20" height="20" viewBox="0 0 20 20"><path d="M4 2V16.500H18.500" fill="none" stroke="#f2f2f4" stroke-width="1.300"/><path d="M4 0.500L5.800 3.300H2.200ZM19.800 16.500L17 14.700V18.300Z" fill="#f2f2f4"/><circle cx="12" cy="8.500" r="5.600" fill="url(#gGl)"/><path d="M9 6C10.500 5 12 6 12.500 7.500C13 9 15 9 15.500 7" fill="none" stroke="#bfeee0" stroke-width="1"/></svg><svg class="ic" style="left:558px;top:60.5px" width="20" height="20" viewBox="0 0 20 20"><path d="M4 2V16.500H18.500" fill="none" stroke="#f2f2f4" stroke-width="1.300"/><path d="M4 0.500L5.800 3.300H2.200ZM19.800 16.500L17 14.700V18.300Z" fill="#f2f2f4"/><path d="M9 8C11 5.500 15.500 6.500 15.500 10.500C15.500 12 14.500 13 13.500 13.500" fill="none" stroke="#f2f2f4" stroke-width="1.200"/><path d="M7.500 6V10.500H12" fill="none" stroke="#f2f2f4" stroke-width="1.200"/></svg><i class="sv" style="left:582px;top:61.5px;height:18px"></i><svg class="ic" style="left:587px;top:60.5px" width="20" height="20" viewBox="0 0 20 20"><path d="M4 2V16.500H18.500" fill="none" stroke="#f2f2f4" stroke-width="1.300"/><path d="M4 0.500L5.800 3.300H2.200ZM19.800 16.500L17 14.700V18.300Z" fill="#f2f2f4"/><path d="M5 15.500L9 11.500" stroke="#f2f2f4" stroke-width="1"/><path d="M9 6L11 4H17V10L15 12H9Z" fill="#dfe9fa" stroke="#27376a" stroke-width=".9"/><rect x="9" y="6" width="6" height="6" fill="#8fb4ec" stroke="#27376a" stroke-width=".9"/></svg><svg class="ic" style="left:610px;top:60.5px" width="20" height="20" viewBox="0 0 20 20"><path d="M4 2V16.500H18.500" fill="none" stroke="#f2f2f4" stroke-width="1.300"/><path d="M4 0.500L5.800 3.300H2.200ZM19.800 16.500L17 14.700V18.300Z" fill="#f2f2f4"/><path d="M5 15.500L9 11.500" stroke="#f2f2f4" stroke-width="1"/><path d="M9 6L11 4H17V10L15 12H9Z" fill="#b9cff2"/><path d="M9 6L11 4H17L15 6Z" fill="#eef4ff"/><rect x="9" y="6" width="6" height="6" fill="#d6e4fa"/></svg><svg class="ic" style="left:633px;top:60.5px" width="20" height="20" viewBox="0 0 20 20"><path d="M4 2V16.500H18.500" fill="none" stroke="#f2f2f4" stroke-width="1.300"/><path d="M4 0.500L5.800 3.300H2.200ZM19.800 16.500L17 14.700V18.300Z" fill="#f2f2f4"/><path d="M5 15.500L8 12.500" stroke="#f2f2f4" stroke-width="1"/><rect x="8" y="5" width="10.500" height="7.500" fill="#8fb4ec" stroke="#f0f4fc" stroke-width="1"/><rect x="9.500" y="6.500" width="7.500" height="4.500" fill="#c4daf8"/></svg><i class="sv" style="left:658px;top:61.5px;height:18px"></i><svg class="ic" style="left:661px;top:60.5px" width="20" height="20" viewBox="0 0 20 20"><path d="M4 2V16.500H18.500" fill="none" stroke="#f2f2f4" stroke-width="1.300"/><path d="M4 0.500L5.800 3.300H2.200ZM19.800 16.500L17 14.700V18.300Z" fill="#f2f2f4"/><path d="M4.500 16L13 7.500" stroke="#f2f2f4" stroke-width="1.100"/><rect x="2.500" y="15" width="3" height="3" fill="#6f95dc"/></svg><svg class="ic" style="left:685px;top:60.5px" width="20" height="20" viewBox="0 0 20 20"><path d="M4 2V16.500H18.500" fill="none" stroke="#f2f2f4" stroke-width="1.300"/><path d="M4 0.500L5.800 3.300H2.200ZM19.800 16.500L17 14.700V18.300Z" fill="#f2f2f4"/><path d="M4.500 16L12 8.500" stroke="#f2f2f4" stroke-width="1.100"/><path d="M12.500 2.500H17.500L12.500 8.500H17.500" fill="none" stroke="#5b8be0" stroke-width="1.700"/></svg><svg class="ic" style="left:708px;top:60.5px" width="20" height="20" viewBox="0 0 20 20"><path d="M4 2V16.500H18.500" fill="none" stroke="#f2f2f4" stroke-width="1.300"/><path d="M4 0.500L5.800 3.300H2.200ZM19.800 16.500L17 14.700V18.300Z" fill="#f2f2f4"/><path d="M4.500 16L12 8.500" stroke="#f2f2f4" stroke-width="1.100"/><path d="M12.500 3.200C13.500 2 17 2 17 4C17 5.500 15 5.500 14.500 5.500C15 5.500 17.300 5.600 17.300 7.300C17.300 9.300 13.500 9.300 12.500 8" fill="none" stroke="#5b8be0" stroke-width="1.600"/></svg><i class="sv" style="left:733px;top:61.5px;height:18px"></i><svg class="ic" style="left:737px;top:60.5px" width="20" height="20" viewBox="0 0 20 20"><path d="M4 2V16.500H18.500" fill="none" stroke="#f2f2f4" stroke-width="1.300"/><path d="M4 0.500L5.800 3.300H2.200ZM19.800 16.500L17 14.700V18.300Z" fill="#f2f2f4"/><path d="M8 10C8 5.500 12 4.500 15 6.500" fill="none" stroke="#f2f2f4" stroke-width="1.400"/><path d="M13.500 3L17.500 7.500L12 8.500Z" fill="#f2f2f4"/><path d="M11 10.500L15.500 15.500M15.500 10.500L11 15.500" stroke="#5b8be0" stroke-width="1.700"/></svg><svg class="ic" style="left:760px;top:60.5px" width="20" height="20" viewBox="0 0 20 20"><path d="M4 2V16.500H18.500" fill="none" stroke="#f2f2f4" stroke-width="1.300"/><path d="M4 0.500L5.800 3.300H2.200ZM19.800 16.500L17 14.700V18.300Z" fill="#f2f2f4"/><path d="M8 10C8 5.500 12 4.500 15 6.500" fill="none" stroke="#f2f2f4" stroke-width="1.400"/><path d="M13.500 3L17.500 7.500L12 8.500Z" fill="#f2f2f4"/><path d="M11 10.500L13.200 13.200L15.500 10.500M13.200 13.200V16" fill="none" stroke="#5b8be0" stroke-width="1.700"/></svg><svg class="ic" style="left:783px;top:60.5px" width="20" height="20" viewBox="0 0 20 20"><path d="M4 2V16.500H18.500" fill="none" stroke="#f2f2f4" stroke-width="1.300"/><path d="M4 0.500L5.800 3.300H2.200ZM19.800 16.500L17 14.700V18.300Z" fill="#f2f2f4"/><path d="M8 10C8 5.500 12 4.500 15 6.500" fill="none" stroke="#f2f2f4" stroke-width="1.400"/><path d="M13.500 3L17.500 7.500L12 8.500Z" fill="#f2f2f4"/></svg>
<div class="tb" style="left:7px;top:87px;width:26px;height:423px"></div>
<i class="gh" style="left:13px;top:91px"></i>
<svg class="ic" style="left:10px;top:97px" width="20" height="20" viewBox="0 0 20 20"><path d="M3.500 16.500L16.500 3.500" stroke="#ececee" stroke-width="1.300"/><rect x="2.1" y="15.1" width="2.8" height="2.8" fill="#e6ecfb" stroke="#4f6cc4" stroke-width=".8"/><rect x="15.1" y="2.1" width="2.8" height="2.8" fill="#e6ecfb" stroke="#4f6cc4" stroke-width=".8"/></svg><svg class="ic" style="left:10px;top:119px" width="20" height="20" viewBox="0 0 20 20"><path d="M4 16L16 4" stroke="#c8c8cc" stroke-width="1.300"/><path d="M17.500 2.500L16.800 6.500L13.500 3.200ZM2.500 17.500L3.200 13.500L6.500 16.800Z" fill="#c8c8cc"/><rect x="8.6" y="8.6" width="2.8" height="2.8" fill="#e6ecfb" stroke="#4f6cc4" stroke-width=".8"/></svg><svg class="ic" style="left:10px;top:141px" width="20" height="20" viewBox="0 0 20 20"><path d="M3 13H10.500" stroke="#ececee" stroke-width="1.300"/><path d="M10.500 13C17 13 17.500 5 10.500 5.500" fill="none" stroke="#ececee" stroke-width="1.300"/><rect x="1.6" y="11.6" width="2.8" height="2.8" fill="#e6ecfb" stroke="#4f6cc4" stroke-width=".8"/><rect x="9.1" y="11.6" width="2.8" height="2.8" fill="#e6ecfb" stroke="#4f6cc4" stroke-width=".8"/><rect x="9.1" y="4.1" width="2.8" height="2.8" fill="#e6ecfb" stroke="#4f6cc4" stroke-width=".8"/></svg><svg class="ic" style="left:10px;top:163px" width="20" height="20" viewBox="0 0 20 20"><path d="M10 2.500L17.500 8L14.500 16.500H5.500L2.500 8Z" fill="url(#gW)"/></svg><svg class="ic" style="left:10px;top:185px" width="20" height="20" viewBox="0 0 20 20"><rect x="3.500" y="6" width="13" height="9" fill="url(#gW)"/><rect x="2.1" y="13.6" width="2.8" height="2.8" fill="#e6ecfb" stroke="#4f6cc4" stroke-width=".8"/><rect x="15.1" y="4.6" width="2.8" height="2.8" fill="#e6ecfb" stroke="#4f6cc4" stroke-width=".8"/></svg><svg class="ic" style="left:10px;top:207px" width="20" height="20" viewBox="0 0 20 20"><path d="M3.500 16C4 9 8 4.500 16.500 3.500" fill="none" stroke="#ececee" stroke-width="1.300"/><rect x="2.1" y="14.6" width="2.8" height="2.8" fill="#e6ecfb" stroke="#4f6cc4" stroke-width=".8"/><rect x="6.1" y="6.6" width="2.8" height="2.8" fill="#e6ecfb" stroke="#4f6cc4" stroke-width=".8"/><rect x="15.1" y="2.1" width="2.8" height="2.8" fill="#e6ecfb" stroke="#4f6cc4" stroke-width=".8"/></svg><svg class="ic" style="left:10px;top:229px" width="20" height="20" viewBox="0 0 20 20"><circle cx="10" cy="10" r="7" fill="url(#gSp)"/><path d="M9.500 10.500L14 6" stroke="#9ab0e0" stroke-width=".9"/><rect x="8.1" y="9.1" width="2.8" height="2.8" fill="#e6ecfb" stroke="#4f6cc4" stroke-width=".8"/></svg><svg class="ic" style="left:10px;top:251px" width="20" height="20" viewBox="0 0 20 20"><path d="M5 4C6.500 2 9.500 3 10 4C11.500 2.500 15 3 15.500 5.500C18 6.500 17.500 10 16 11C17.500 13.500 15 16.500 12.500 15.500C11 17.500 8 17 7 15.500C4 16.500 2 13.500 3.500 11.500C1.500 9.500 2.500 5 5 4Z" fill="url(#gW)"/></svg><svg class="ic" style="left:10px;top:273px" width="20" height="20" viewBox="0 0 20 20"><path d="M3.500 16.500C3.500 5 9 9 10 12C11 15 16 13 16.500 4" fill="none" stroke="#ececee" stroke-width="1.500"/><rect x="2.1" y="15.1" width="2.8" height="2.8" fill="#e6ecfb" stroke="#4f6cc4" stroke-width=".8"/><rect x="8.6" y="10.1" width="2.8" height="2.8" fill="#e6ecfb" stroke="#4f6cc4" stroke-width=".8"/><rect x="15.1" y="2.6" width="2.8" height="2.8" fill="#e6ecfb" stroke="#4f6cc4" stroke-width=".8"/></svg><svg class="ic" style="left:10px;top:295px" width="20" height="20" viewBox="0 0 20 20"><ellipse cx="10" cy="11" rx="6.500" ry="4" fill="url(#gW)"/><rect x="2.1" y="9.6" width="2.8" height="2.8" fill="#e6ecfb" stroke="#4f6cc4" stroke-width=".8"/><rect x="15.1" y="9.6" width="2.8" height="2.8" fill="#e6ecfb" stroke="#4f6cc4" stroke-width=".8"/><rect x="8.6" y="5.6" width="2.8" height="2.8" fill="#e6ecfb" stroke="#8a8a90" stroke-width=".8"/></svg><svg class="ic" style="left:10px;top:317px" width="20" height="20" viewBox="0 0 20 20"><path d="M5 12C3.500 5.500 16 5.500 16.500 10C17 14 10 15 8 14Z" fill="url(#gW)"/><rect x="2.6" y="8.6" width="2.8" height="2.8" fill="#e6ecfb" stroke="#4f6cc4" stroke-width=".8"/><rect x="7.6" y="13.1" width="2.8" height="2.8" fill="#e6ecfb" stroke="#4f6cc4" stroke-width=".8"/></svg><svg class="ic" style="left:10px;top:339px" width="20" height="20" viewBox="0 0 20 20"><path d="M8 2.500H13L15.500 5V10H8Z" fill="#e4ecfa"/><rect x="4" y="7" width="7" height="6" fill="#c8d6f0" stroke="#8aa0d0" stroke-width=".6"/><circle cx="12.500" cy="13" r="3.800" fill="url(#gSp)"/><path d="M14 15L18 13V18H14Z" fill="#111"/><rect x="2.1" y="12.1" width="2.8" height="2.8" fill="#e6ecfb" stroke="#4f6cc4" stroke-width=".8"/></svg><svg class="ic" style="left:10px;top:361px" width="20" height="20" viewBox="0 0 20 20"><rect x="5" y="4.500" width="8" height="7.500" fill="#d4d8e2"/><circle cx="13" cy="12.500" r="4" fill="url(#gSp)"/><rect x="2.6" y="12.1" width="2.8" height="2.8" fill="#e6ecfb" stroke="#4f6cc4" stroke-width=".8"/></svg><svg class="ic" style="left:10px;top:383px" width="20" height="20" viewBox="0 0 20 20"><path d="M3.500 16.500L16.500 3.500M4 4.500L9.500 10" stroke="#ececee" stroke-width="1.100"/><rect x="8.1" y="8.6" width="2.8" height="2.8" fill="#e6ecfb" stroke="#4f6cc4" stroke-width=".8"/></svg><svg class="ic" style="left:10px;top:405px" width="20" height="20" viewBox="0 0 20 20"><rect x="3.500" y="4.500" width="12" height="10" fill="#9dbaf0"/><path d="M3.500 8.500L9.500 14.500M3.500 12L6 14.500M5 4.500L15 14.500M8.500 4.500L15.500 11.500M12 4.500L15.500 8" stroke="#e8f0ff" stroke-width="1"/><path d="M3.500 2V17.500M15.500 2V17.500M1.500 4.500H17.500M1.500 14.500H17.500" stroke="#f4f4f6" stroke-width="1.100"/><path d="M15.500 9V14.500H9" fill="none" stroke="#4a7ae0" stroke-width="1" stroke-dasharray="1.500 1"/></svg><svg class="ic" style="left:10px;top:427px" width="20" height="20" viewBox="0 0 20 20"><defs><linearGradient id="gGr" x1="0" y1="0" x2="1" y2="1"><stop offset="0" stop-color="#e6eefc"/><stop offset="1" stop-color="#4a74cc"/></linearGradient></defs><rect x="3.500" y="4.500" width="12" height="10" fill="url(#gGr)"/><path d="M3.500 2V17.500M15.500 2V17.500M1.500 4.500H17.500M1.500 14.500H17.500" stroke="#f4f4f6" stroke-width="1.100"/><path d="M15.500 9V14.500H9" fill="none" stroke="#4a7ae0" stroke-width="1" stroke-dasharray="1.500 1"/></svg><svg class="ic" style="left:10px;top:449px" width="20" height="20" viewBox="0 0 20 20"><path d="M3 4H13.500L17 7.500V16.500H3Z" fill="#dfe5f2"/><circle cx="10" cy="10.500" r="4" fill="#a9c0ea" stroke="#3a55a0" stroke-width="1.200"/></svg><svg class="ic" style="left:10px;top:471px" width="20" height="20" viewBox="0 0 20 20"><rect x="3" y="3.500" width="14" height="2.600" fill="#e4e4e6"/><g fill="#f2f2f4"><rect x="3" y="7.200" width="4" height="2.800"/><rect x="8" y="7.200" width="4" height="2.800"/><rect x="13" y="7.200" width="4" height="2.800"/><rect x="3" y="11" width="4" height="2.800"/><rect x="8" y="11" width="4" height="2.800"/><rect x="13" y="11" width="4" height="2.800"/><rect x="3" y="14.800" width="4" height="2.800"/><rect x="8" y="14.800" width="4" height="2.800"/><rect x="13" y="14.800" width="4" height="2.800"/></g></svg><svg class="ic" style="left:10px;top:493px" width="20" height="20" viewBox="0 0 20 20"><text x="10" y="15.800" font-family="Liberation Sans,sans-serif" font-size="17" fill="#f8f8fa" stroke="#f8f8fa" stroke-width=".8" text-anchor="middle">A</text></svg>
<div class="tb" style="left:764px;top:87px;width:25px;height:405px"></div>
<i class="gh" style="left:769px;top:91px"></i>
<svg class="ic" style="left:766px;top:97px" width="20" height="20" viewBox="0 0 20 20"><path d="M9 12L17.500 3.500" stroke="#e8c860" stroke-width="3.200" stroke-linecap="round"/><path d="M9.800 13L17 5.800" stroke="#a07820" stroke-width="1"/><path d="M7.500 11L10 13.500" stroke="#f4e8e0" stroke-width="2.200"/><path d="M4.500 15.500C4 13 6 10.500 7.500 11L10 13.500C9.500 15.500 6.500 16.500 4.500 15.500Z" fill="#d0541c"/><path d="M2 16.500H18" stroke="#f4f4f6" stroke-width="1.200"/><path d="M5.500 16.500L6.500 14" stroke="#d0541c" stroke-width="1.600"/></svg><svg class="ic" style="left:766px;top:119px" width="20" height="20" viewBox="0 0 20 20"><rect x="2" y="3" width="7" height="6" rx="2.500" fill="url(#gW)"/><circle cx="11.500" cy="12.500" r="3.600" fill="#b4c8ec" stroke="#8aa4dc" stroke-width=".8"/><circle cx="14" cy="14" r="3.600" fill="#b4c8ec" stroke="#8aa4dc" stroke-width=".8"/><path d="M11 4.500C13.500 4 15.500 5 15.500 8" fill="none" stroke="#f0f0f2" stroke-width="1.200"/><path d="M13.800 7L15.500 9.500L17.200 7Z" fill="#f0f0f2"/></svg><svg class="ic" style="left:766px;top:141px" width="20" height="20" viewBox="0 0 20 20"><path d="M8.500 3.500V16H2.500Z" fill="url(#gW)"/><path d="M11.500 3.500V16H17.500Z" fill="url(#gW)" opacity=".8"/><path d="M10 1.500V18.500" stroke="#f0f0f2" stroke-width="1"/></svg><svg class="ic" style="left:766px;top:163px" width="20" height="20" viewBox="0 0 20 20"><path d="M2.500 16.500V12.500C2.500 11 5.500 11.500 6 10V6C6 2.500 14 2.500 14 6V10C14.500 11.500 18 11 18 12.500" fill="none" stroke="#f4f4f6" stroke-width="1.500"/><path d="M2.500 16.500H18" stroke="#f4f4f6" stroke-width="1.500"/><path d="M4.500 14.500V13.500C6 13.500 8 12.500 8 10.500V6.500C8 5 12 5 12 6.500V10.500C12 12.500 14 13.500 18 13.500" fill="none" stroke="#7f9fe0" stroke-width="1"/></svg><svg class="ic" style="left:766px;top:185px" width="20" height="20" viewBox="0 0 20 20"><rect x="3" y="3" width="6" height="6" fill="#f8f8fa" stroke="#333" stroke-width=".8"/><rect x="11" y="3" width="6" height="6" fill="#8fb0ea" stroke="#a8c4f4" stroke-width=".8"/><rect x="3" y="11" width="6" height="6" fill="#8fb0ea" stroke="#a8c4f4" stroke-width=".8"/><path d="M11 11H17V17H11Z" fill="#8fb0ea"/><path d="M17 11V17H11Z" fill="#111"/><rect x="5" y="5" width="2" height="2" fill="#ddd"/></svg><svg class="ic" style="left:766px;top:207px" width="20" height="20" viewBox="0 0 20 20"><path d="M10 3V17M3 10H17" stroke="#f4f4f6" stroke-width="1.800"/><path d="M10 1L13 4.500H7ZM10 19L13 15.500H7ZM1 10L4.500 7V13ZM19 10L15.500 7V13Z" fill="#f4f4f6"/><rect x="8" y="8" width="4" height="4" fill="#8fa8dc" stroke="#56669a" stroke-width=".8"/></svg><svg class="ic" style="left:766px;top:229px" width="20" height="20" viewBox="0 0 20 20"><path d="M12.500 3.800A6.500 6.500 0 1 1 7 4" fill="none" stroke="#ececee" stroke-width="1.500"/><path d="M6 2.500C8 1 10.500 1.500 11.500 2.500L9.500 5.500Z" fill="#6f8fe0"/></svg><svg class="ic" style="left:766px;top:251px" width="20" height="20" viewBox="0 0 20 20"><rect x="3" y="3" width="14" height="14" fill="#a9c2ee"/><rect x="3" y="3" width="14" height="14" fill="none" stroke="#dfe8fa" stroke-width="1"/><rect x="3.500" y="9" width="7.500" height="7.500" fill="url(#gW)" stroke="#6a7aa8" stroke-width=".6"/></svg><svg class="ic" style="left:766px;top:273px" width="20" height="20" viewBox="0 0 20 20"><path d="M3.500 3H12L16.500 16.500H3.500Z" fill="url(#gW)"/><path d="M12 3L16.500 16.500H12Z" fill="#9fb8ea"/><path d="M5 13H11" stroke="#111" stroke-width="1.500"/><path d="M9.500 10.500L12.500 13L9.500 15.500Z" fill="#111"/></svg><svg class="ic" style="left:766px;top:295px" width="20" height="20" viewBox="0 0 20 20"><path d="M2 10H8" stroke="#f4f4f6" stroke-width="1.500"/><path d="M11 10H18" stroke="#a8c0ee" stroke-width="1.200" stroke-dasharray="2 1.500"/><path d="M6.500 16.500L12.500 3" stroke="#8faae0" stroke-width="1.500"/></svg><svg class="ic" style="left:766px;top:317px" width="20" height="20" viewBox="0 0 20 20"><path d="M2 10H6" stroke="#f4f4f6" stroke-width="1.500"/><path d="M6.500 10H12" stroke="#d8d8dc" stroke-width="1.200" stroke-dasharray="2 1.500"/><path d="M12 16.500L17.500 3.500" stroke="#8faae0" stroke-width="1.500"/></svg><svg class="ic" style="left:766px;top:339px" width="20" height="20" viewBox="0 0 20 20"><path d="M3.500 7H16.500V15.500H3.500Z" fill="url(#gW)"/><rect x="11.800" y="4.500" width="2.600" height="3.500" fill="#7f9fe0"/></svg><svg class="ic" style="left:766px;top:361px" width="20" height="20" viewBox="0 0 20 20"><path d="M3.500 8H16.500V16H3.500Z" fill="url(#gW)"/><path d="M5.500 4.500V8M13.500 4.500V8" stroke="#7f86d8" stroke-width="2"/><path d="M4 6L5.500 8.500L7 6ZM12 6L13.500 8.500L15 6Z" fill="#4f66c8"/></svg><svg class="ic" style="left:766px;top:383px" width="20" height="20" viewBox="0 0 20 20"><path d="M3 10H17" stroke="#f0f0f2" stroke-width="1.300"/><path d="M7.500 7.500L12.500 12.500M12.500 7.500L7.500 12.500M10 6.500V13.500" stroke="#5f86e0" stroke-width="1.200"/></svg><svg class="ic" style="left:766px;top:405px" width="20" height="20" viewBox="0 0 20 20"><path d="M8.500 3H17V16.500H3.500V8Z" fill="url(#gW)"/><path d="M2.500 7.500L8 2" stroke="#7d8db4" stroke-width="2.200"/></svg><svg class="ic" style="left:766px;top:427px" width="20" height="20" viewBox="0 0 20 20"><path d="M5 17V10.500C5 6.500 8 4.500 12 4.500H17V17Z" fill="url(#gW)"/><path d="M3 9.500C3.500 5 7 2.500 11.500 2.500" fill="none" stroke="#7d8db4" stroke-width="2.200"/></svg><svg class="ic" style="left:766px;top:449px" width="20" height="20" viewBox="0 0 20 20"><path d="M4 12C6 8 9 8 10 11C11 14 14 13 16 9" fill="none" stroke="#5a76b0" stroke-width="2.600"/><circle cx="4.500" cy="12" r="1.600" fill="#7f9fe0" stroke="#10183a" stroke-width="1.200"/><circle cx="16" cy="10" r="1.600" fill="#7f9fe0" stroke="#10183a" stroke-width="1.200"/><path d="M3.500 15V18M17.500 4V8" stroke="#f0d890" stroke-width="1.200"/></svg><svg class="ic" style="left:766px;top:471px" width="20" height="20" viewBox="0 0 20 20"><path d="M8 5L11 3H15L13 5.500Z" fill="#f4f6fa"/><path d="M3 10L5 8V14L3 16.500Z" fill="#c8d4ea"/><path d="M15 9L18 6.500V13L15 16Z" fill="#e4eaf6"/><rect x="6.500" y="9" width="7" height="7.500" fill="#a8c0ee" stroke="#e8f0ff" stroke-width=".8"/><path d="M6.500 9L8.500 7H15L13.500 9Z" fill="#dfe8fa"/></svg>
<div id="canvas">
<div id="vplabel" class="abs">[−][西南等轴测][真实]</div>
<svg class="abs" style="left:0;top:0" width="724" height="421" viewBox="37 87 724 421">
<defs>
<linearGradient id="cg" gradientUnits="userSpaceOnUse" x1="330.5" y1="131.0" x2="269.5" y2="194.5">
<stop offset="0" stop-color="#8c8c8c"/><stop offset=".06" stop-color="#a6a6a6"/><stop offset=".25" stop-color="#c1c1c1"/><stop offset=".38" stop-color="#e6e6e6"/><stop offset=".47" stop-color="#ffffff"/><stop offset=".63" stop-color="#ffffff"/><stop offset=".73" stop-color="#dcdcdc"/><stop offset=".85" stop-color="#a8a8a8"/><stop offset="1" stop-color="#7c7c7c"/></linearGradient>
<linearGradient id="ig" gradientUnits="userSpaceOnUse" x1="620.5" y1="406.5" x2="557.0" y2="471.0">
<stop offset="0" stop-color="#989898"/><stop offset=".3" stop-color="#bebebe"/><stop offset=".55" stop-color="#f2f2f2"/><stop offset=".8" stop-color="#f8f8f8"/><stop offset="1" stop-color="#d4d4d4"/></linearGradient>
<linearGradient id="rg" gradientUnits="userSpaceOnUse" x1="576.8" y1="426.8" x2="600.8" y2="450.8">
<stop offset="0" stop-color="#c6c6c6"/><stop offset=".45" stop-color="#d4d4d4"/><stop offset="1" stop-color="#efefef"/></linearGradient>
<filter id="bl" x="-5%" y="-5%" width="110%" height="110%"><feGaussianBlur stdDeviation="0.6"/></filter>
</defs>
<g filter="url(#bl)"><path d="M330.50 131.00 L620.50 406.50 A45.26 17.00 -45.45 0 1 557.00 471.00 L269.50 194.50 A44.03 10.00 -46.15 0 1 330.50 131.00Z" fill="url(#cg)"/>
<ellipse cx="588.75" cy="438.75" rx="45.26" ry="17.00" transform="rotate(-45.45 588.75 438.75)" fill="url(#rg)"/>
<path d="M620.50 406.50 A45.26 17.00 -45.45 0 0 557.00 471.00" fill="none" stroke="#b0b0b0" stroke-width="1"/>
<clipPath id="hc"><ellipse cx="588.25" cy="437.95" rx="38.0" ry="12.60" transform="rotate(-45.45 588.25 437.95)"/></clipPath>
<ellipse cx="588.25" cy="437.95" rx="38.0" ry="12.60" transform="rotate(-45.45 588.25 437.95)" fill="#8e8e8e"/>
<g clip-path="url(#hc)"><ellipse cx="591.25" cy="440.75" rx="38.0" ry="12.60" transform="rotate(-45.45 591.25 440.75)" fill="url(#ig)"/></g>
</g>
<rect x="336" y="263" width="1" height="26" fill="#f2f2f2"/>
<g stroke-linecap="round" fill="none">
<line x1="190.500" y1="307" x2="200" y2="276" stroke="#2f7d32" stroke-width="4"/>
<line x1="191.500" y1="306" x2="200.500" y2="276" stroke="#4ea24e" stroke-width="1.500"/>
<circle cx="200" cy="275.500" r="1.600" fill="#9fd89f" stroke="none"/>
<line x1="192" y1="306" x2="223" y2="288" stroke="#b8453f" stroke-width="4"/>
<line x1="192" y1="305" x2="223" y2="287" stroke="#d46a60" stroke-width="1.500"/>
<line x1="192" y1="309" x2="221" y2="336" stroke="#3f7fe0" stroke-width="4"/>
<line x1="193" y1="308" x2="222" y2="335" stroke="#8fc0ff" stroke-width="1.500"/>
<path d="M199 258.500l5 5.500l5.500-5.500M204 264v6" stroke="#3c9a3c" stroke-width="1"/>
<path d="M223 270.500l11 11M234 270.500l-11 11" stroke="#c03a3a" stroke-width="1"/>
<path d="M221 323h11l-10 11h11" stroke="#2f6fe0" stroke-width="1"/>
</g>
<g fill="none" stroke-width="1">
<rect x="739.500" y="497.500" width="15" height="9" stroke="#f4f4f4" stroke-width="1.300"/>
<line x1="747.500" y1="497" x2="757" y2="479" stroke="#6fd08a"/>
<line x1="740" y1="497" x2="731" y2="489" stroke="#5560a0" stroke-width=".8"/>
<line x1="755" y1="503" x2="759" y2="500" stroke="#b05a50" stroke-width=".8"/>
</g>
<g fill="none" stroke="#f4f4f4">
<path d="M699 104.500h10" stroke-width="2.600"/>
<path d="M720.500 101h6v6h-6z" stroke-width="2.100"/><path d="M722.800 99.800v-1.500h6.200v6.200h-1.500" stroke-width="1.500"/>
<path d="M739.500 98.500l7.500 7.500M747 98.500l-7.500 7.500" stroke-width="2.600"/>
</g>
</svg>
</div>
<div id="hist">[<span class="cj">压印</span>(I)/<span class="cj">分割实体</span>(P)/<span class="cj">抽壳</span>(S)/<span class="cj">清除</span>(L)/<span class="cj">检查</span>(C)/<span class="cj">放弃</span>(U)/<span class="cj">退出</span>(X)] &lt;<span class="cj">退出</span>&gt;: *<span class="cj">取消</span>*</div>
<div id="cmdin"></div>
<div id="cmdleft"><i class="gh" style="left:3px;top:6px;width:18px;height:5px;background:conic-gradient(from 0deg at 1px 1px,transparent 0 75%,#a4a4a4 75% 100%) 0 0/2.5px 2.5px"></i>
<svg class="abs" style="left:3px;top:14px" width="16" height="16" viewBox="0 0 16 16"><path d="M3.500 3.500L12 12M12 3.500L3.500 12" stroke="#fff" stroke-width="2.200" fill="none"/></svg>
<svg class="abs" style="left:2px;top:36px" width="18" height="18" viewBox="0 0 18 18"><path d="M15.500 16.500L8 8.500" stroke="#f4f4f6" stroke-width="2.800" stroke-linecap="round"/><path d="M4 2.500A4 4 0 1 0 9.500 8A4 4 0 0 0 8.500 3L6.500 6L4.500 5.500Z" fill="#f4f4f6"/></svg></div>
<svg class="abs" style="left:35px;top:541px" width="32" height="20" viewBox="0 0 32 20"><rect x="1.500" y="3.500" width="14" height="13" rx="1" fill="#e4e4ea" stroke="#8a8a98" stroke-width="1"/><path d="M4 7L8 10L4 13" fill="none" stroke="#2a2a5a" stroke-width="1.600"/><path d="M9 14H13" stroke="#2a2a5a" stroke-width="1.600"/><path d="M19 8.500H26L22.500 12.500Z" fill="#9a9a9a"/></svg>
<div id="cmdph">鍵入命令</div>
<div id="status"></div>
<div class="sbb" style="left:309px;width:30px"></div><div class="sbb" style="left:340px;width:25px"></div><div class="sbb" style="left:366px;width:427px;border-right:none"></div><div class="abs" style="left:313px;top:569px;font-size:12.5px;line-height:16px;font-weight:bold;color:#fff;white-space:nowrap">模型</div><svg class="abs" style="left:340px;top:564px" width="453" height="27" viewBox="340 564 453 27">
<g fill="none">
<path d="M347.500 569.500V578.500M343 574H352" stroke="#e8e8e8" stroke-width="1.200"/>
<rect x="351" y="578.500" width="9.500" height="3.500" rx="1" fill="#e0e0e0"/>
<path d="M372.500 570V582.500H384" stroke="#3d8bf0" stroke-width="1.500"/><path d="M372.500 579H376V582.500" stroke="#3d8bf0" stroke-width="1"/>
<circle cx="400" cy="576.500" r="6" stroke="#c4c4c4" stroke-width="1.400"/><path d="M400 576.500H408.500M400 576.500L406 570.500" stroke="#c4c4c4" stroke-width="1.300"/>
<path d="M416.500 574.500H423.500L420 579Z" fill="#f4f4f4"/>
<path d="M434 568L448 584M441 566V585" stroke="#b4b4b4" stroke-width="1.400"/>
<path d="M455.500 574.500H462.500L459 579Z" fill="#f4f4f4"/>
<path d="M467.500 565V590" stroke="#666" stroke-width="1"/>
<path d="M472 583.500H488M472 583.500L486 570" stroke="#3d8bf0" stroke-width="1.500"/><circle cx="479" cy="577" r="1.600" fill="#3d8bf0"/>
<rect x="498.500" y="571" width="13" height="12.500" stroke="#3d8bf0" stroke-width="1.500"/><circle cx="500" cy="572" r="2.600" fill="#37c837" stroke="#0a2a0a" stroke-width="1.400"/>
<path d="M520 574.500H527L523.500 579Z" fill="#f4f4f4"/>
<path d="M532.500 565V590" stroke="#666" stroke-width="1"/>
<path d="M536 571H552M536 576.500H552M536 581.500H552" stroke="#d4d4d4" stroke-width="2.600"/><path d="M545 576.500H552M545 581.500H552" stroke="#d4d4d4" stroke-width="1"/>
<path d="M536 576.500H545M536 581.500H544" stroke="#e4e4e4" stroke-width="3"/>
<path d="M556.500 565V590M558.500 565V590" stroke="#6a6a6a" stroke-width="1"/>
<path d="M565 586L570.500 570L573 577L580 585.500L574 583L571.500 586L569.500 581Z" fill="#2f7fe8"/><path d="M568.500 572L572 568.500L573.500 574Z" fill="#2f7fe8"/><circle cx="576" cy="571.500" r="2.800" stroke="#3d8bf0" stroke-width="1.200"/>
<path d="M588 586L593.500 570L596 577L603 585.500L597 583L594.500 586L592.500 581Z" fill="#c8c8c8"/><path d="M598 568L601 572L598.500 574L601.500 577" stroke="#d8d8d8" stroke-width="1.300"/>
<path d="M606 571H612M606 575H612M606 579H612" stroke="#d0d0d0" stroke-width="1.500"/>
<text x="640" y="581" font-family="Liberation Sans,sans-serif" font-size="11" fill="#d8d8d8">1:1</text>
<path d="M668.500 565V590M711.500 565V590M737.500 565V590M764.500 565V590" stroke="#666" stroke-width="1"/>
<circle cx="680" cy="577" r="4.500" stroke="#c8c8c8" stroke-width="2"/>
<path d="M695 574.500H702L698.500 579Z" fill="#e4e4e4"/>
<path d="M724 571V583M718 577H730" stroke="#c8c8c8" stroke-width="1.500"/>
<rect x="744.500" y="572" width="12" height="9" stroke="#c8c8c8" stroke-width="1.300"/>
<path d="M772 572H785M772 577H785M772 582H785" stroke="#c8c8c8" stroke-width="1.500"/>
</g></svg>
<div id="wm"><b>头条</b> @小黄花CAD</div>
<div id="edge"></div>
</div>
</body></html>
